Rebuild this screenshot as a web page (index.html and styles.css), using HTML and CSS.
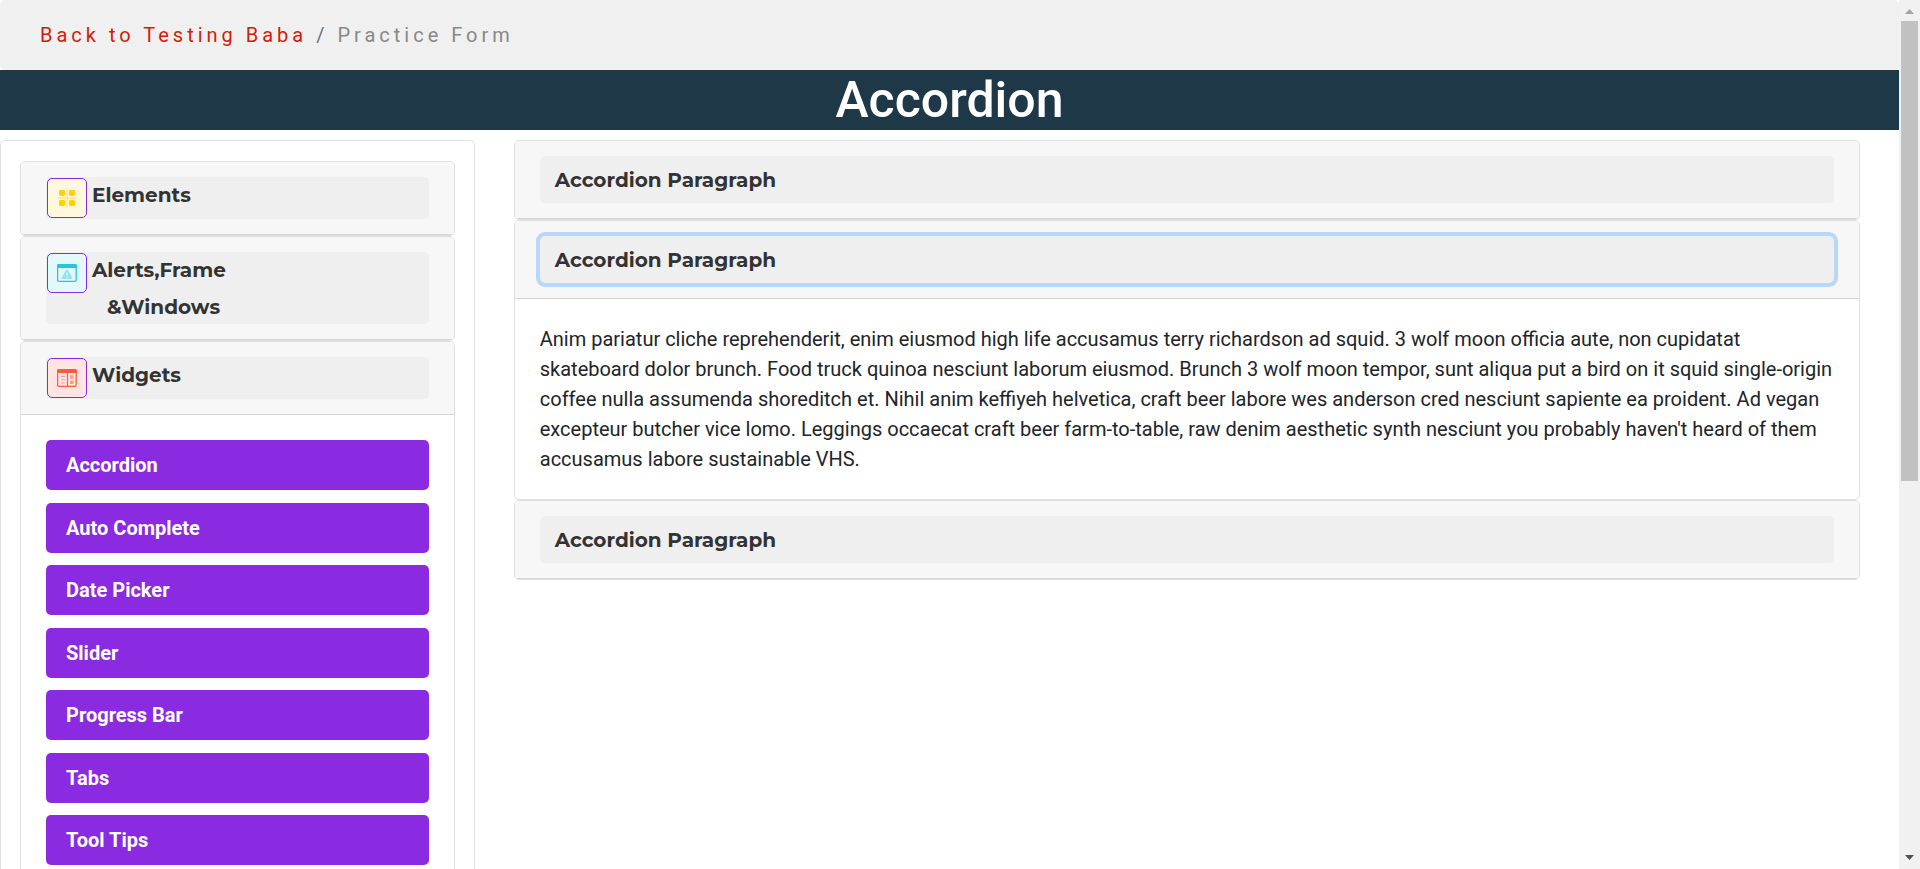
FILE: index.html
```html
<!DOCTYPE html>
<html lang="en">
<head>
<meta charset="utf-8">
<title>Accordion</title>
<link rel="stylesheet" href="styles.css">
</head>
<body>
<div class="window">
  <div class="page">
    <nav class="breadcrumb" aria-label="Breadcrumb">
      <a class="breadcrumb-link" href="#">Back to Testing Baba</a> <span class="breadcrumb-sep">/</span> <span class="breadcrumb-current">Practice Form</span>
    </nav>
    <h1 class="title">Accordion</h1>
    <div class="columns">
      <aside class="sidebar">
        <section class="card">
          <div class="card-header">
            <button class="menu-button" type="button">
              <span class="icon icon-elements">
                <svg width="20" height="20" viewBox="0 0 20 20" aria-hidden="true">
                  <path d="M9.3 .5h1.6v19H9.3zM.5 9.3h19v1.6H.5z" fill="#ffe98a"/>
                  <g fill="#ffd200"><rect x="2" y="2" width="6" height="6" rx="1.4"/><rect x="12" y="2" width="6" height="6" rx="1.4"/><rect x="2" y="12" width="6" height="6" rx="1.4"/><rect x="12" y="12" width="6" height="6" rx="1.4"/></g>
                </svg>
              </span>
              <span class="menu-label">Elements</span>
            </button>
          </div>
        </section>
        <section class="card">
          <div class="card-header">
            <button class="menu-button" type="button">
              <span class="icon icon-alerts">
                <svg width="20" height="20" viewBox="0 0 20 20" aria-hidden="true">
                  <rect x=".6" y="1.6" width="18.6" height="16.8" rx="1.4" fill="none" stroke="#26c6da" stroke-width="1.3"/>
                  <path d="M0 5V3a2 2 0 0 1 2-2h16a2 2 0 0 1 2 2v2z" fill="#26c6da"/>
                  <path d="M9.1 7.2a1 1 0 0 1 1.8 0l4.4 7.3a1 1 0 0 1-.9 1.5H5.6a1 1 0 0 1-.9-1.5z" fill="#93e2ec"/>
                  <path d="M9.4 9.5h1.3v3H9.4zM9.4 13.4h1.3v1.2H9.4z" fill="#e2f8fb"/>
                </svg>
              </span>
              <span class="menu-label">Alerts,Frame <span class="menu-label-more">&amp;Windows</span></span>
            </button>
          </div>
        </section>
        <section class="card">
          <div class="card-header">
            <button class="menu-button" type="button" aria-expanded="true">
              <span class="icon icon-widgets">
                <svg width="20" height="20" viewBox="0 0 20 20" aria-hidden="true">
                  <rect x=".6" y="1.6" width="18.6" height="16.8" rx="1.4" fill="none" stroke="#ff5a3c" stroke-width="1.3"/>
                  <path d="M0 5V3a2 2 0 0 1 2-2h16a2 2 0 0 1 2 2v2zM9.9 5h1.2v13.5H9.9z" fill="#ff5a3c"/>
                  <path d="M4 7.9h4.2v1.1H4zM4 11.2h4.2v1.1H4zM4 14.5h4.2v1.1H4zM13 7.3h3.5v3.5H13zM13 12.5h3.5v3.5H13z" fill="#ff9d8b"/>
                </svg>
              </span>
              <span class="menu-label">Widgets</span>
            </button>
          </div>
          <ul class="links">
            <li class="links-item"><a class="link" href="#">Accordion</a></li>
            <li class="links-item"><a class="link" href="#">Auto Complete</a></li>
            <li class="links-item"><a class="link" href="#">Date Picker</a></li>
            <li class="links-item"><a class="link" href="#">Slider</a></li>
            <li class="links-item"><a class="link" href="#">Progress Bar</a></li>
            <li class="links-item"><a class="link" href="#">Tabs</a></li>
            <li class="links-item"><a class="link" href="#">Tool Tips</a></li>
          </ul>
        </section>
      </aside>
      <main class="content">
        <section class="card">
          <div class="card-header"><button class="toggle" type="button">Accordion Paragraph</button></div>
        </section>
        <section class="card">
          <div class="card-header"><button class="toggle toggle-active" type="button" aria-expanded="true" aria-controls="paragraph">Accordion Paragraph</button></div>
          <div class="card-body" id="paragraph">Anim pariatur cliche reprehenderit, enim eiusmod high life accusamus terry richardson ad squid. 3 wolf moon officia aute, non cupidatat skateboard dolor brunch. Food truck quinoa nesciunt laborum eiusmod. Brunch 3 wolf moon tempor, sunt aliqua put a bird on it squid single-origin coffee nulla assumenda shoreditch et. Nihil anim keffiyeh helvetica, craft beer labore wes anderson cred nesciunt sapiente ea proident. Ad vegan excepteur butcher vice lomo. Leggings occaecat craft beer farm-to-table, raw denim aesthetic synth nesciunt you probably haven't heard of them accusamus labore sustainable VHS.</div>
        </section>
        <section class="card">
          <div class="card-header"><button class="toggle" type="button">Accordion Paragraph</button></div>
        </section>
      </main>
    </div>
  </div>
  <div class="scrollbar" aria-hidden="true">
    <svg class="scroll-arrow" width="21" height="21" viewBox="0 0 21 21"><path d="M6 14L10.5 9 15 14z" fill="#a3a3a3"/></svg>
    <div class="scroll-track"><div class="scroll-thumb"></div></div>
    <svg class="scroll-arrow" width="21" height="21" viewBox="0 0 21 21"><path d="M6 7L10.5 12 15 7z" fill="#505050"/></svg>
  </div>
</div>
</body>
</html>
```
FILE: styles.css
```css
* {
  box-sizing: border-box;
}

body {
  margin: 0;
  font-family: Roboto, "Liberation Sans", sans-serif;
  font-size: 20px;
  line-height: 30px;
  color: #212529;
  background: #fff;
}

.window {
  display: flex;
  height: 100vh;
  overflow: hidden;
}

.page {
  flex: 1;
  min-width: 0;
}

.breadcrumb {
  padding: 20px 40px;
  border-radius: 5px;
  background: #f0f0f0;
  letter-spacing: 4px;
}

.breadcrumb-link {
  color: #d01c0a;
  text-decoration: none;
}

.breadcrumb-sep {
  color: #6c757d;
}

.breadcrumb-current {
  color: #888;
}

.title {
  margin: 0 0 10px;
  background: #1e3847;
  color: #fff;
  font-size: 50px;
  font-weight: 500;
  line-height: 60px;
  text-align: center;
}

.columns {
  display: grid;
  grid-template-columns: 1fr 3fr;
  align-items: start;
}

.sidebar {
  padding: 20px 19px;
  border: 1px solid #dee2e6;
  border-radius: 5px;
}

.content {
  padding: 0 39px;
}

.card {
  border: 1px solid #dfdfdf;
  border-radius: 5px;
  overflow: hidden;
}

.card-header {
  padding: 15px 25px;
  border-bottom: 1px solid #d6d6d6;
  background: #f7f7f7;
}

.menu-button,
.toggle {
  width: 100%;
  border: 0;
  border-radius: 5px;
  background: #efefef;
  color: #333;
  font-family: Montserrat, Inter, "Liberation Sans", sans-serif;
  font-size: 20px;
  font-weight: 700;
  text-align: left;
}

.menu-button {
  display: flex;
  align-items: flex-start;
  gap: 5px;
  min-height: 42px;
  padding: 0 1px;
  line-height: 37px;
}

.menu-label {
  margin-bottom: -2px;
}

.menu-label-more {
  display: block;
  padding-left: 15px;
}

.icon {
  display: flex;
  align-items: center;
  justify-content: center;
  width: 40px;
  height: 40px;
  margin-top: 1px;
  border: 1px solid #8a2be2;
  border-radius: 5px;
}

.icon-elements {
  background: #fff8dd;
}

.icon-alerts {
  background: #e2f8fb;
}

.icon-widgets {
  background: #ffe5e1;
}

.toggle {
  display: block;
  padding: 9px 15px 8px;
  line-height: 30px;
}

.toggle-active {
  outline: 0;
  box-shadow: 0 0 0 4px #b8d7f9;
}

.card-body {
  padding: 25px;
}

.links {
  margin: 0;
  padding: 25px;
  list-style: none;
}

.links-item {
  margin-bottom: 12px;
}

.links-item:nth-child(odd) {
  margin-bottom: 13px;
}

.link {
  display: block;
  padding: 10px 20px;
  border-radius: 5px;
  background: #8a2be2;
  color: #fff;
  font-weight: 700;
  text-decoration: none;
}

.scrollbar {
  display: flex;
  flex-direction: column;
  width: 21px;
  background: #f1f1f1;
}

.scroll-arrow {
  display: block;
}

.scroll-track {
  flex: 1;
  padding: 0 2px;
}

.scroll-thumb {
  height: 460px;
  background: #c1c1c1;
}
```
